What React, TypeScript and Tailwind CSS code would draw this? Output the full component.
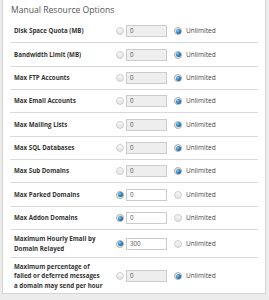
import React from "react";

function Radio({ checked }: { checked: boolean }) {
  if (checked) {
    return (
      <span className="relative inline-block w-[8px] h-[8px] rounded-full border border-[#b0b0b0] bg-[#e6e6e6] shrink-0">
        <span className="absolute left-[0.5px] top-[0.5px] w-[5px] h-[5px] rounded-full bg-[radial-gradient(circle_at_35%_35%,#8ccaf2_0%,#2b82c4_45%,#1a4f7d_100%)]" />
      </span>
    );
  }
  return (
    <span className="inline-block w-[8px] h-[8px] rounded-full border border-[#cfcfcf] bg-[linear-gradient(180deg,#f8f8f8,#e2e2e2)] shrink-0" />
  );
}

type Row = { label: React.ReactNode; value: string; limited: boolean; h: string };

const rows: Row[] = [
  { label: "Disk Space Quota (MB)", value: "0", limited: false, h: "h-[23px]" },
  { label: "Bandwidth Limit (MB)", value: "0", limited: false, h: "h-[24px]" },
  { label: "Max FTP Accounts", value: "0", limited: false, h: "h-[23px]" },
  { label: "Max Email Accounts", value: "0", limited: false, h: "h-[23px]" },
  { label: "Max Mailing Lists", value: "0", limited: false, h: "h-[24px]" },
  { label: "Max SQL Databases", value: "0", limited: false, h: "h-[23px]" },
  { label: "Max Sub Domains", value: "0", limited: false, h: "h-[23px]" },
  { label: "Max Parked Domains", value: "0", limited: true, h: "h-[24px]" },
  { label: "Max Addon Domains", value: "0", limited: true, h: "h-[23px]" },
  {
    label: (
      <>
        Maximum Hourly Email by
        <br />
        Domain Relayed
      </>
    ),
    value: "300",
    limited: true,
    h: "h-[28px]",
  },
  {
    label: (
      <>
        Maximum percentage of
        <br />
        failed or deferred messages
        <br />
        a domain may send per hour
      </>
    ),
    value: "0",
    limited: false,
    h: "h-[36px]",
  },
];

export default function App() {
  return (
    <div
      className="w-[269px] h-[300px] bg-[#ececec] pl-[2px] pr-[3px] overflow-hidden"
      style={{ fontFamily: '"Open Sans", "Liberation Sans", sans-serif' }}
    >
      <div className="w-[264px] h-[294px] bg-white border-l border-r border-b border-[#d4d4d4]">
        <div className="h-[20px] pl-[8px] pt-[4px] text-[8.6px] leading-[12px] text-[#555]">
          Manual Resource Options
        </div>
        <div className="mx-[7px]">
          {rows.map((r, i) => (
            <div
              key={i}
              className={`flex items-center ${r.h} ${i < rows.length - 1 ? "border-b border-[#d9d9d9]" : ""}`}
            >
              <div className="w-[106px] pl-[4px] text-[6.2px] leading-[9.6px] font-bold text-[#333]">
                {r.label}
              </div>
              <Radio checked={r.limited} />
              <div
                className={`ml-[2px] w-[41px] h-[12px] border border-[#cccccc] pl-[3px] text-[6.2px] leading-[10px] text-[#555] ${
                  r.limited ? "bg-white" : "bg-[#eeeeee]"
                }`}
              >
                {r.value}
              </div>
              <span className="ml-[7px] flex">
                <Radio checked={!r.limited} />
              </span>
              <span className="ml-[4px] text-[6.5px] text-[#444]">Unlimited</span>
            </div>
          ))}
        </div>
      </div>
    </div>
  );
}
